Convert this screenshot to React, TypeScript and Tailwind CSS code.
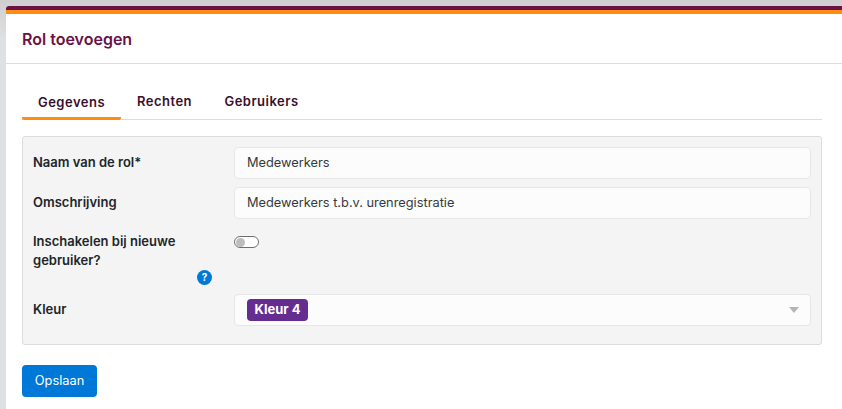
export default function App() {
  return (
    <div className="h-[409px] w-[842px] overflow-hidden bg-[linear-gradient(to_bottom,#cfcfcf,#dfe0e2_40px)] pl-[6px] pt-[6px] font-['Inter',sans-serif]">
      <div className="h-full overflow-hidden rounded-tl-[3px] bg-white">
        <div className="h-1 bg-[#6b1146]" />
        <div className="h-1 bg-[#ff8c11]" />

        {/* Header */}
        <div className="flex h-[50px] items-center border-b border-[#dcdcdc] pl-4">
          <h1 className="text-[16px] font-semibold text-[#6b1146]">Rol toevoegen</h1>
        </div>

        <div className="pl-4 pr-[20px]">
          {/* Tabs */}
          <div className="mt-[21px] flex h-[35px] border-b border-[#dcdcdc]">
            <div className="flex h-[35px] w-[99px] items-center justify-center rounded-[2px] border-b-[3px] border-[#ff8c11] pt-[3px] text-[13px] font-semibold tracking-[0.5px] text-[#3a0f2b]">
              Gegevens
            </div>
            <div className="flex h-[34px] w-[87px] items-center justify-center text-[13px] font-semibold tracking-[0.5px] text-[#3a0f2b]">
              Rechten
            </div>
            <div className="flex h-[34px] w-[107px] items-center justify-center text-[13px] font-semibold tracking-[0.5px] text-[#3a0f2b]">
              Gebruikers
            </div>
          </div>

          {/* Form panel */}
          <div className="mt-4 h-[209px] w-[800px] rounded-[3px] border border-[#dcdcdc] bg-[#f4f4f4] px-[10px] pt-[10px]">
            <div className="flex h-8 items-center">
              <label className="w-[201px] text-[13px] font-semibold text-[#212529]">Naam van de rol*</label>
              <div className="flex h-8 w-[577px] items-center rounded-[4px] border border-[#e6e6e6] bg-[#fcfcfc] px-[12px] text-[12.8px] text-[#343a40]">
                Medewerkers
              </div>
            </div>

            <div className="mt-2 flex h-8 items-center">
              <label className="w-[201px] text-[13px] font-semibold text-[#212529]">Omschrijving</label>
              <div className="flex h-8 w-[577px] items-center rounded-[4px] border border-[#e6e6e6] bg-[#fcfcfc] px-[12px] text-[12.8px] text-[#343a40]">
                Medewerkers t.b.v. urenregistratie
              </div>
            </div>

            <div className="mt-[9px] flex h-[66px]">
              <div className="w-[201px]">
                <label className="mt-[4px] block w-[180px] text-[13px] font-semibold leading-[18.5px] text-[#212529]">
                  Inschakelen bij nieuwe gebruiker?
                </label>
                <div className="mt-[1px] flex justify-end pr-[22px]">
                  <span className="flex h-[15px] w-[15px] items-center justify-center rounded-full bg-[#0078d7] text-[10px] font-bold text-white">
                    ?
                  </span>
                </div>
              </div>
              <div className="mt-[8px] flex h-[12px] w-[25px] items-center rounded-full border border-[#6f6f6f] bg-white pl-[1px]">
                <span className="h-[9px] w-[9px] rounded-full bg-[#bdbdbd]" />
              </div>
            </div>

            <div className="flex h-8 items-center">
              <label className="-mt-[1px] w-[201px] text-[13px] font-semibold text-[#212529]">Kleur</label>
              <div className="flex h-8 w-[577px] items-center justify-between rounded-[4px] border border-[#e6e6e6] bg-[#fcfcfc] pl-[12px] pr-[11px]">
                <span className="flex h-[22px] w-[61px] items-center justify-center rounded-[4px] bg-[#662d91] text-[13px] font-bold text-white">
                  Kleur 4
                </span>
                <span className="h-0 w-0 border-x-[5px] border-t-[6px] border-x-transparent border-t-[#b5b5b5]" />
              </div>
            </div>
          </div>

          <button className="mt-5 h-8 w-[75px] rounded-[4px] bg-[#0078d7] text-[12.8px] text-white">Opslaan</button>
        </div>
      </div>
    </div>
  )
}
